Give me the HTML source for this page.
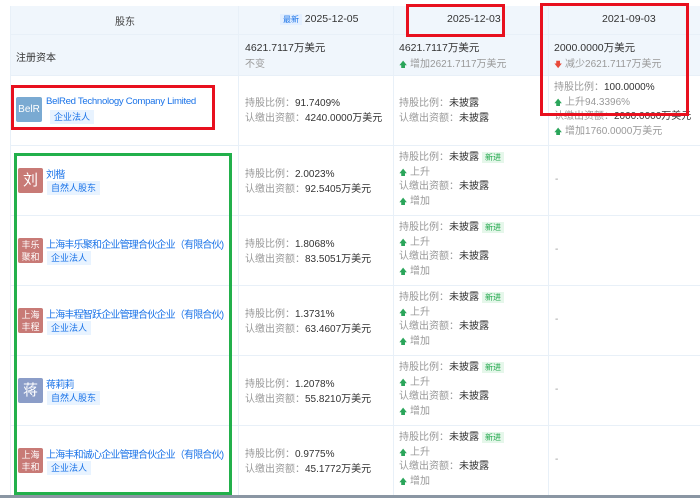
<!DOCTYPE html>
<html><head><meta charset="utf-8"><style>
*{margin:0;padding:0;box-sizing:border-box}
body{width:700px;height:498px;background:#fff;position:relative;overflow:hidden;font-family:"Liberation Sans","Noto Sans CJK SC",sans-serif;font-size:10px;color:#333}
.a{position:absolute;white-space:nowrap}
.g{color:#999}
.hl{position:absolute;left:10px;right:0;height:1px;background:#e8f0f8}
.vl{position:absolute;top:6px;bottom:3px;width:1px;background:#e8f0f8}
.av{position:absolute;width:25px;height:25px;border-radius:2px;color:#fff;text-align:center}
.tag{position:absolute;background:#e8f3ff;color:#1a73e8;font-size:9px;padding:1px 4px;line-height:12px}
.nm{position:absolute;color:#1a73e8;font-size:10px;white-space:nowrap;letter-spacing:-0.8px}
.new{background:#e5f7ea;color:#1fa64a;font-size:8px;padding:1px 3px;margin-left:3px}
.up{color:#2aa55a;font-size:8px}
.dn{color:#e84a3a;font-size:8px}
.box{position:absolute;border:3px solid #e8101e}
</style></head><body>
<div class="a" style="left:10px;top:6px;width:690px;height:69px;background:#f0f6fc"></div>
<div class="hl" style="top:34px"></div>
<div class="hl" style="top:75px"></div>
<div class="hl" style="top:145px"></div>
<div class="hl" style="top:215px"></div>
<div class="hl" style="top:285px"></div>
<div class="hl" style="top:355px"></div>
<div class="hl" style="top:425px"></div>
<div class="vl" style="left:10px"></div>
<div class="vl" style="left:238px"></div>
<div class="vl" style="left:393px"></div>
<div class="vl" style="left:548px"></div>
<div class="a" style="left:0;top:495px;width:700px;height:3px;background:#8a96a3"></div>

<div class="a" style="left:115px;top:13px;font-size:10px;color:#444">股东</div>
<div class="a" style="left:280px;top:13px;"><span style="background:#e3efff;color:#1a73e8;font-size:8px;padding:1px 3px">最新</span> <span style="font-size:10.5px">2025-12-05</span></div>
<div class="a" style="left:447px;top:13px;font-size:10.5px">2025-12-03</div>
<div class="a" style="left:602px;top:13px;font-size:10.5px">2021-09-03</div>

<div class="a" style="left:16px;top:49px">注册资本</div>
<div class="a" style="left:245px;top:40px;font-size:10.5px">4621.7117万美元</div>
<div class="a g" style="left:245px;top:55px">不变</div>
<div class="a" style="left:399px;top:40px;font-size:10.5px">4621.7117万美元</div>
<div class="a g" style="left:399px;top:55px"><span class="up">🡅</span> 增加2621.7117万美元</div>
<div class="a" style="left:554px;top:40px;font-size:10.5px">2000.0000万美元</div>
<div class="a g" style="left:554px;top:55px"><span class="dn">🡇</span> 减少2621.7117万美元</div>

<div class="av" style="left:16px;top:97px;width:26px;background:#7aaad2;line-height:25px;font-size:10px">BelR</div>
<div class="nm" style="left:46px;top:96px;letter-spacing:-0.3px;font-size:9.6px">BelRed Technology Company Limited</div>
<div class="tag" style="left:50px;top:110px">企业法人</div>
<div class="a" style="left:245px;top:96px;line-height:15px"><span class="g">持股比例：</span>91.7409%<br><span class="g">认缴出资额：</span>4240.0000万美元</div>
<div class="a" style="left:399px;top:96px;line-height:15px"><span class="g">持股比例：</span>未披露<br><span class="g">认缴出资额：</span>未披露</div>
<div class="a" style="left:554px;top:81px;line-height:14.5px"><span class="g">持股比例：</span>100.0000%<br><span class="g"><span class="up">🡅</span> 上升94.3396%</span><br><span class="g">认缴出资额：</span>2000.0000万美元<br><span class="g"><span class="up">🡅</span> 增加1760.0000万美元</span></div>

<div class="av" style="left:18px;top:168px;background:#c87a76;font-size:15px;line-height:25px">刘</div>
<div class="nm" style="left:46px;top:166px">刘楷</div>
<div class="tag" style="left:47px;top:181px">自然人股东</div>
<div class="a" style="left:245px;top:167px;line-height:15px"><span class="g">持股比例：</span>2.0023%<br><span class="g">认缴出资额：</span>92.5405万美元</div>

<div class="av" style="left:18px;top:238px;background:#c87a76;font-size:9px;line-height:12px;padding-top:1px">丰乐<br>聚和</div>
<div class="nm" style="left:46px;top:236px">上海丰乐聚和企业管理合伙企业（有限合伙)</div>
<div class="tag" style="left:47px;top:251px">企业法人</div>
<div class="a" style="left:245px;top:237px;line-height:15px"><span class="g">持股比例：</span>1.8068%<br><span class="g">认缴出资额：</span>83.5051万美元</div>

<div class="av" style="left:18px;top:308px;background:#c87a76;font-size:9px;line-height:12px;padding-top:1px">上海<br>丰程</div>
<div class="nm" style="left:46px;top:306px">上海丰程智跃企业管理合伙企业（有限合伙)</div>
<div class="tag" style="left:47px;top:321px">企业法人</div>
<div class="a" style="left:245px;top:307px;line-height:15px"><span class="g">持股比例：</span>1.3731%<br><span class="g">认缴出资额：</span>63.4607万美元</div>

<div class="av" style="left:18px;top:378px;background:#8b9dc8;font-size:15px;line-height:25px">蒋</div>
<div class="nm" style="left:46px;top:376px">蒋莉莉</div>
<div class="tag" style="left:47px;top:391px">自然人股东</div>
<div class="a" style="left:245px;top:377px;line-height:15px"><span class="g">持股比例：</span>1.2078%<br><span class="g">认缴出资额：</span>55.8210万美元</div>

<div class="av" style="left:18px;top:448px;background:#c87a76;font-size:9px;line-height:12px;padding-top:1px">上海<br>丰和</div>
<div class="nm" style="left:46px;top:446px">上海丰和诚心企业管理合伙企业（有限合伙)</div>
<div class="tag" style="left:47px;top:461px">企业法人</div>
<div class="a" style="left:245px;top:447px;line-height:15px"><span class="g">持股比例：</span>0.9775%<br><span class="g">认缴出资额：</span>45.1772万美元</div>

<div class="a" style="left:399px;top:151px;line-height:14.5px"><span class="g">持股比例：</span>未披露<span class="new">新进</span><br><span class="g"><span class="up">🡅</span> 上升</span><br><span class="g">认缴出资额：</span>未披露<br><span class="g"><span class="up">🡅</span> 增加</span></div>
<div class="a" style="left:399px;top:221px;line-height:14.5px"><span class="g">持股比例：</span>未披露<span class="new">新进</span><br><span class="g"><span class="up">🡅</span> 上升</span><br><span class="g">认缴出资额：</span>未披露<br><span class="g"><span class="up">🡅</span> 增加</span></div>
<div class="a" style="left:399px;top:291px;line-height:14.5px"><span class="g">持股比例：</span>未披露<span class="new">新进</span><br><span class="g"><span class="up">🡅</span> 上升</span><br><span class="g">认缴出资额：</span>未披露<br><span class="g"><span class="up">🡅</span> 增加</span></div>
<div class="a" style="left:399px;top:361px;line-height:14.5px"><span class="g">持股比例：</span>未披露<span class="new">新进</span><br><span class="g"><span class="up">🡅</span> 上升</span><br><span class="g">认缴出资额：</span>未披露<br><span class="g"><span class="up">🡅</span> 增加</span></div>
<div class="a" style="left:399px;top:431px;line-height:14.5px"><span class="g">持股比例：</span>未披露<span class="new">新进</span><br><span class="g"><span class="up">🡅</span> 上升</span><br><span class="g">认缴出资额：</span>未披露<br><span class="g"><span class="up">🡅</span> 增加</span></div>
<div class="a g" style="left:555px;top:174px">-</div>
<div class="a g" style="left:555px;top:244px">-</div>
<div class="a g" style="left:555px;top:314px">-</div>
<div class="a g" style="left:555px;top:384px">-</div>
<div class="a g" style="left:555px;top:454px">-</div>

<div class="box" style="left:11px;top:85px;width:204px;height:45px"></div>
<div class="box" style="left:406px;top:4px;width:99px;height:33px"></div>
<div class="box" style="left:540px;top:3px;width:149px;height:113px"></div>
<div class="box" style="left:14px;top:153px;width:218px;height:342px;border-color:#22b04b"></div>
</body></html>
